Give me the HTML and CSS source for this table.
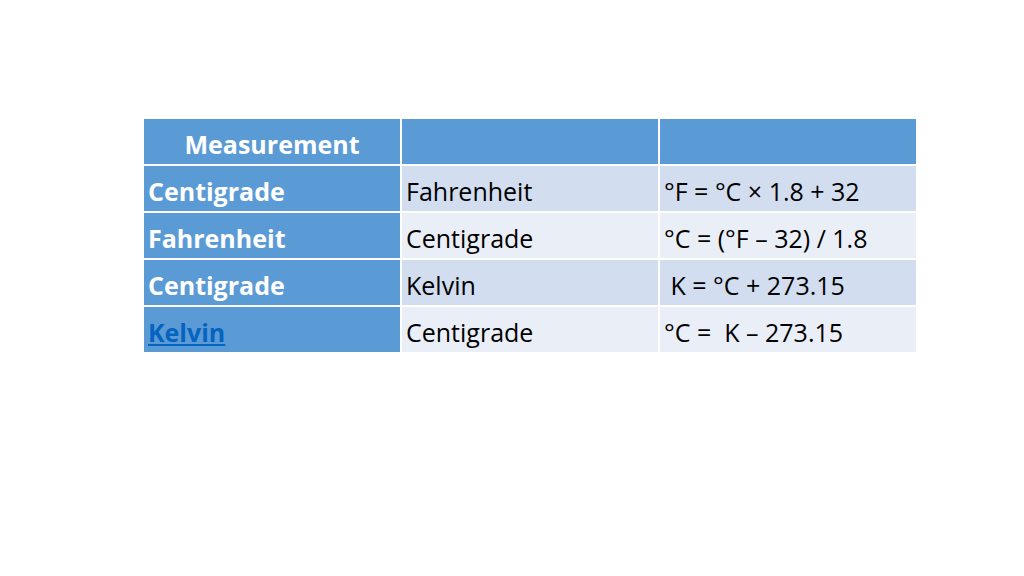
FILE: index.html
```html
<!DOCTYPE html>
<html>
<head>
<meta charset="utf-8">
<link rel="stylesheet" href="styles.css">
</head>
<body>
<div class="slide">
  <div class="table">
    <div class="cell head first">Measurement</div>
    <div class="cell head"></div>
    <div class="cell head"></div>

    <div class="cell key">Centigrade</div>
    <div class="cell odd">Fahrenheit</div>
    <div class="cell odd">°F = °C × 1.8 + 32</div>

    <div class="cell key">Fahrenheit</div>
    <div class="cell even">Centigrade</div>
    <div class="cell even">°C = (°F – 32) / 1.8</div>

    <div class="cell key">Centigrade</div>
    <div class="cell odd">Kelvin</div>
    <div class="cell odd">&nbsp;K = °C + 273.15</div>

    <div class="cell key"><a class="link" href="#">Kelvin</a></div>
    <div class="cell even">Centigrade</div>
    <div class="cell even">°C = &nbsp;K – 273.15</div>
  </div>
</div>
</body>
</html>
```
FILE: styles.css
```css
html, body {
  margin: 0;
  padding: 0;
  background: #ffffff;
}
.slide {
  width: 1024px;
  height: 576px;
  padding: 119px 0 0 144px;
  box-sizing: border-box;
  font-family: "Open Sans", "Liberation Sans", sans-serif;
}
.table {
  display: grid;
  grid-template-columns: 256px 256px 256px;
  grid-auto-rows: 45px;
  gap: 2px;
  width: 772px;
}
.cell {
  display: flex;
  align-items: center;
  padding: 4px 4px 0 4px;
  box-sizing: border-box;
  font-size: 25px;
  color: #000000;
  white-space: pre;
}
.head {
  background: #5b9bd5;
  color: #ffffff;
  font-weight: bold;
}
.head.first {
  justify-content: center;
}
.key {
  background: #5b9bd5;
  color: #ffffff;
  font-weight: bold;
}
.odd {
  background: #d2deef;
}
.even {
  background: #eaeff7;
}
.link {
  color: #0563c1;
  text-decoration: underline;
}
```
